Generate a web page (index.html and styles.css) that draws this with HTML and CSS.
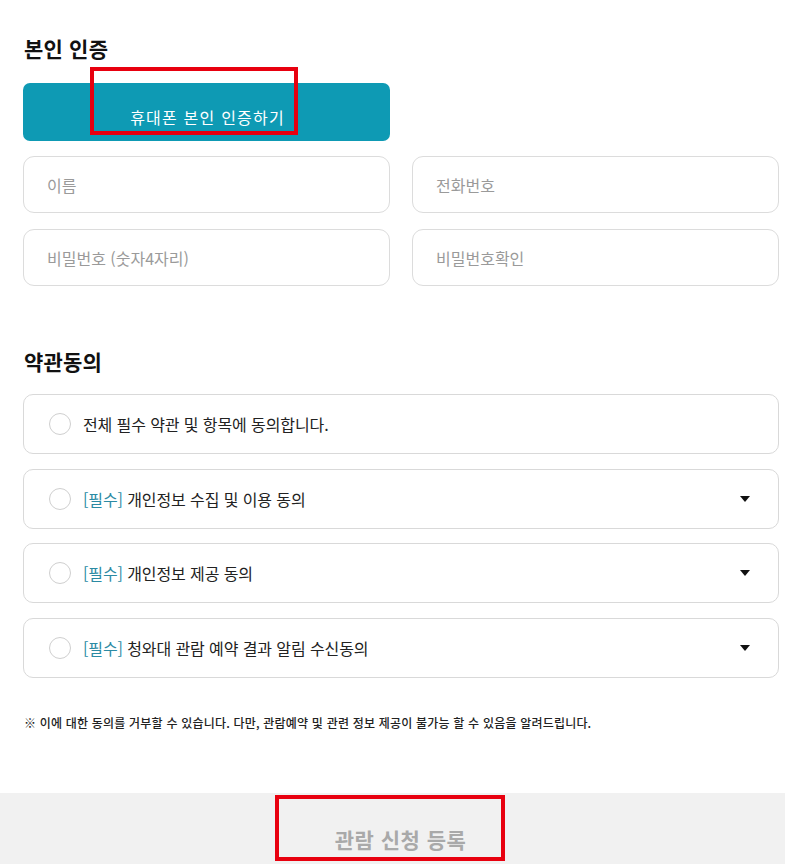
FILE: index.html
```html
<!DOCTYPE html>
<html lang="ko">
<head>
<meta charset="utf-8">
<link rel="stylesheet" href="styles.css">
</head>
<body>
<div class="page">
  <section class="sec auth">
    <h2 class="title">본인 인증</h2>
    <button class="btn-auth">휴대폰 본인 인증하기</button>
    <div class="fields">
      <div class="field">이름</div>
      <div class="field">전화번호</div>
      <div class="field">비밀번호 (숫자4자리)</div>
      <div class="field">비밀번호확인</div>
    </div>
  </section>
  <section class="sec terms">
    <h2 class="title">약관동의</h2>
    <div class="list">
      <div class="item"><span class="radio"></span><span class="label">전체 필수 약관 및 항목에 동의합니다.</span></div>
      <div class="item"><span class="radio"></span><span class="label"><em>[필수]</em> 개인정보 수집 및 이용 동의</span><span class="caret"></span></div>
      <div class="item"><span class="radio"></span><span class="label"><em>[필수]</em> 개인정보 제공 동의</span><span class="caret"></span></div>
      <div class="item"><span class="radio"></span><span class="label"><em>[필수]</em> 청와대 관람 예약 결과 알림 수신동의</span><span class="caret"></span></div>
    </div>
    <p class="note">※ 이에 대한 동의를 거부할 수 있습니다. 다만, 관람예약 및 관련 정보 제공이 불가능 할 수 있음을 알려드립니다.</p>
  </section>
</div>
<div class="submit-bar"><span class="submit">관람 신청 등록</span></div>
<div class="mark mark-1"></div>
<div class="mark mark-2"></div>
</body>
</html>
```
FILE: styles.css
```css
* { box-sizing: border-box; }
html, body { margin: 0; padding: 0; background: #fff; }
body {
  font-family: "Noto Sans CJK KR", "Noto Sans", sans-serif;
  color: #222;
  position: relative;
  height: 864px;
  overflow: hidden;
}
.page { padding: 34px 6px 0 23px; }
.title {
  margin: 0 0 21px 1px;
  font-size: 21px;
  line-height: 28px;
  font-weight: 700;
  color: #111;
  letter-spacing: 0.2px;
}
.btn-auth {
  display: flex;
  align-items: center;
  justify-content: center;
  width: 367px;
  height: 58px;
  margin: 0 0 15px;
  padding: 10px 0 0 2px;
  border: 0;
  border-radius: 7px;
  background: #0e9ab4;
  color: #fff;
  font-family: inherit;
  font-size: 16px;
  letter-spacing: 1.2px;
}
.fields {
  display: grid;
  grid-template-columns: 367px 367px;
  column-gap: 22px;
  row-gap: 16px;
}
.field {
  height: 57px;
  border: 1px solid #dcdcdc;
  border-radius: 11px;
  display: flex;
  align-items: center;
  padding-left: 23px;
  font-size: 16px;
  color: #9a9a9a;
  letter-spacing: 0;
}
.terms { margin-top: 61px; }
.terms .title { margin-bottom: 19px; }
.list { display: flex; flex-direction: column; gap: 14.7px; }
.item {
  height: 60px;
  border: 1px solid #d9d9d9;
  border-radius: 10px;
  display: flex;
  align-items: center;
  padding: 0 28px 0 25px;
}
.radio {
  width: 22px;
  height: 22px;
  border: 1px solid #cfcfcf;
  border-radius: 50%;
  flex: none;
}
.label {
  margin-left: 12px;
  font-size: 16px;
  color: #222;
  letter-spacing: -0.1px;
  flex: 1;
}
.label em { font-style: normal; color: #2b8aa3; }
.caret {
  width: 0;
  height: 0;
  border-left: 5px solid transparent;
  border-right: 5px solid transparent;
  border-top: 6px solid #111;
  flex: none;
}
.note {
  margin: 36px 0 0 1px;
  font-size: 12px;
  line-height: 18px;
  font-weight: 500;
  color: #222;
  letter-spacing: 0.2px;
}
.submit-bar {
  position: absolute;
  left: 0;
  right: 0;
  top: 793px;
  bottom: 0;
  background: #f1f1f1;
  display: flex;
  justify-content: center;
  padding-top: 32px;
}
.submit {
  font-size: 21px;
  line-height: 28px;
  font-weight: 700;
  color: #a9a9a9;
  margin-left: 16px;
  letter-spacing: 0.5px;
}
.mark {
  position: absolute;
  border: 4px solid #e8000f;
}
.mark-1 { left: 90px; top: 67px; width: 208px; height: 68px; }
.mark-2 { left: 275px; top: 795px; width: 230px; height: 66px; }
```
